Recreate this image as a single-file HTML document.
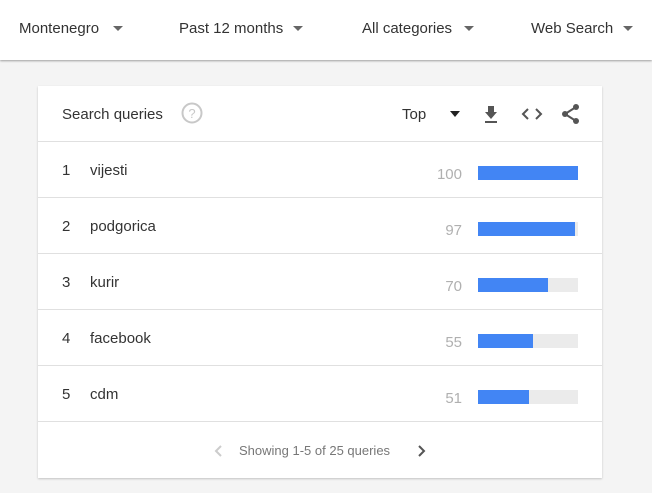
<!DOCTYPE html>
<html><head><style>
body{margin:0;width:652px;height:493px;background:#f4f4f4;font-family:"Liberation Sans",sans-serif;position:relative;overflow:hidden}
.hdr{position:absolute;left:0;top:0;width:652px;height:60px;background:#fff;box-shadow:0 1px 2px rgba(0,0,0,.35)}
.dd{position:absolute;top:20px;font-size:15px;color:#333}
.tri{display:inline-block;width:0;height:0;border-left:5px solid transparent;border-right:5px solid transparent;border-top:5px solid #666;vertical-align:middle;margin-left:10px;position:relative;top:-1px}
.card{position:absolute;left:38px;top:86px;width:564px;height:392px;background:#fff;box-shadow:0 1px 2px rgba(0,0,0,.2)}
.t{position:absolute;font-size:15px;color:#333}
.row{position:absolute;left:0;width:564px;height:56px;border-top:1px solid #e0e0e0}
.n{position:absolute;left:24px;top:20px;font-size:15px;color:#333}
.q{position:absolute;left:52px;top:20px;font-size:15px;color:#333}
.v{position:absolute;right:140px;top:24px;font-size:15px;color:#b0b0b0}
.bg{position:absolute;left:440px;top:24px;width:100px;height:14px;background:#ebebeb}
.b{position:absolute;left:0;top:0;height:14px;background:#4285f4}
</style></head><body>
<div class="hdr">
<div class="dd" style="left:19px">Montenegro<span class="tri" style="margin-left:14px"></span></div>
<div class="dd" style="left:179px">Past 12 months<span class="tri"></span></div>
<div class="dd" style="left:362px">All categories<span class="tri" style="margin-left:12px"></span></div>
<div class="dd" style="left:531px">Web Search<span class="tri"></span></div>
</div>
<div class="card">
<div class="t" style="left:24px;top:20px">Search queries</div>
<svg style="position:absolute;left:142px;top:15px" width="24" height="24"><circle cx="12" cy="12" r="9.5" fill="none" stroke="#c8c8c8" stroke-width="2"/><text x="12" y="17" font-size="13" text-anchor="middle" fill="#c8c8c8" font-family="Liberation Sans">?</text></svg>
<div class="t" style="left:364px;top:20px">Top</div>
<div style="position:absolute;left:412px;top:25px;border-left:5px solid transparent;border-right:5px solid transparent;border-top:6px solid #222"></div>
<svg style="position:absolute;left:445px;top:18px" width="16" height="20"><path d="M5 2h6v6h3l-6 7-6-7h3z" fill="#555"/><rect x="2" y="17" width="12" height="2" fill="#555"/></svg>
<svg style="position:absolute;left:483px;top:20px" width="22" height="16"><path d="M7 3L2 8l5 5M15 3l5 5-5 5" fill="none" stroke="#555" stroke-width="2"/></svg>
<svg style="position:absolute;left:523px;top:17px" width="20" height="22"><circle cx="15" cy="4" r="3" fill="#555"/><circle cx="4" cy="11" r="3" fill="#555"/><circle cx="15" cy="18" r="3" fill="#555"/><path d="M15 4L4 11l11 7" fill="none" stroke="#555" stroke-width="2"/></svg>
<div class="row" style="top:55px"><span class="n">1</span><span class="q">vijesti</span><span class="v">100</span><div class="bg"><div class="b" style="width:100px"></div></div></div>
<div class="row" style="top:111px"><span class="n">2</span><span class="q">podgorica</span><span class="v">97</span><div class="bg"><div class="b" style="width:97px"></div></div></div>
<div class="row" style="top:167px"><span class="n">3</span><span class="q">kurir</span><span class="v">70</span><div class="bg"><div class="b" style="width:70px"></div></div></div>
<div class="row" style="top:223px"><span class="n">4</span><span class="q">facebook</span><span class="v">55</span><div class="bg"><div class="b" style="width:55px"></div></div></div>
<div class="row" style="top:279px"><span class="n">5</span><span class="q">cdm</span><span class="v">51</span><div class="bg"><div class="b" style="width:51px"></div></div></div>
<div class="row" style="top:335px">
<svg style="position:absolute;left:175px;top:22px" width="10" height="14"><path d="M8 2L3 7l5 5" fill="none" stroke="#ccc" stroke-width="2"/></svg>
<span style="position:absolute;left:201px;top:21px;font-size:13px;color:#777">Showing 1-5 of 25 queries</span>
<svg style="position:absolute;left:379px;top:22px" width="10" height="14"><path d="M2 2l5 5-5 5" fill="none" stroke="#555" stroke-width="2"/></svg>
</div>
</div>
</body></html>
